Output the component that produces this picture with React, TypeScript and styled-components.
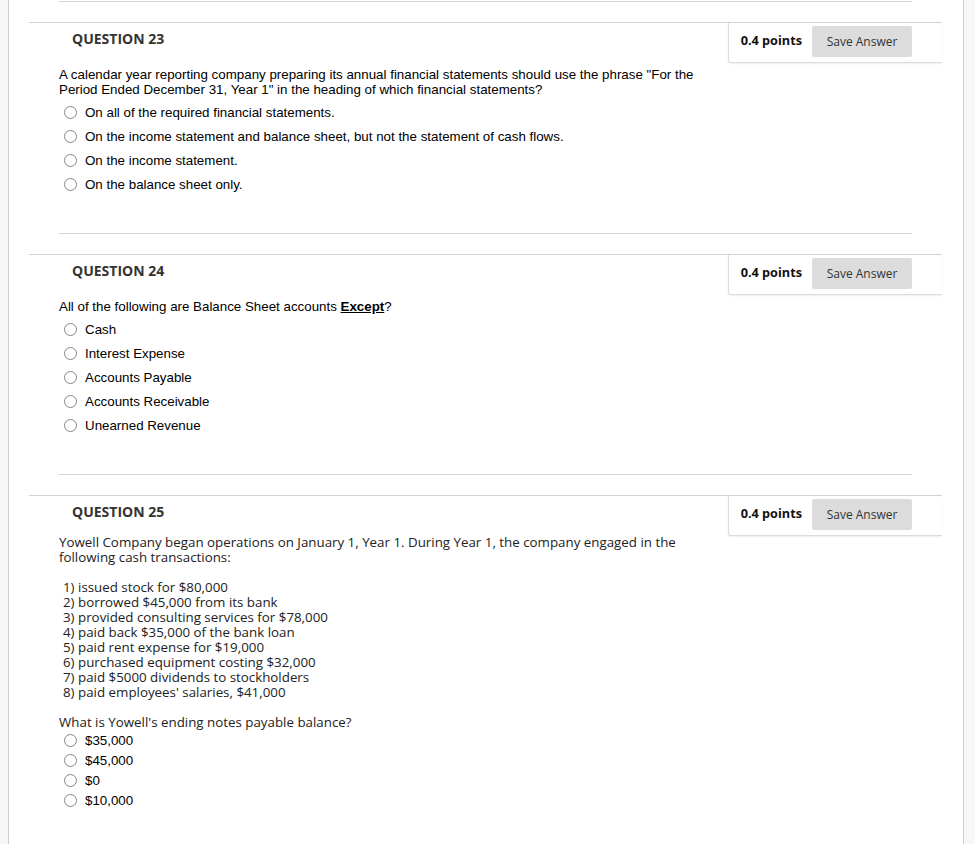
import React from 'react';
import styled, { createGlobalStyle } from 'styled-components';

const Global = createGlobalStyle`
  html, body { margin: 0; padding: 0; background: #f7f7f7; }
  body { font-family: "Liberation Sans", Arial, sans-serif; }
  * { box-sizing: border-box; }
`;

const Page = styled.div`
  display: flex;
  min-height: 844px;
  padding-left: 8px;
  padding-right: 11px;
  background: #f7f7f7;
`;

const Content = styled.main`
  flex: 1;
  background: #fff;
  border-left: 1px solid #cdcdcd;
  border-right: 1px solid #cdcdcd;
  padding-top: 1px;
`;

const Separator = styled.hr<{ $top?: number }>`
  margin: ${(p) => p.$top ?? 0}px 51px 20px 50px;
  height: 0;
  border: 0;
  border-top: 1px solid #d3d3d3;
`;

const Header = styled.div`
  margin: 0 21px 0 20px;
  border-top: 1px solid #d3d3d3;
`;

const PointsBox = styled.div`
  float: right;
  display: flex;
  align-items: center;
  gap: 10px;
  padding: 3px 30px 5px 12px;
  background: #fff;
  border-left: 1px solid #dcdcdc;
  border-bottom: 1px solid #dcdcdc;
  border-bottom-left-radius: 3px;
  box-shadow: 0 1px 2px rgba(0, 0, 0, 0.07);
`;

const Points = styled.span`
  font-family: "Open Sans", sans-serif;
  font-weight: 700;
  font-size: 12.7px;
  line-height: 17px;
  padding-bottom: 3px;
  color: #111;
`;

const SaveButton = styled.button`
  width: 100px;
  height: 31px;
  padding: 0;
  border: 0;
  border-radius: 2px;
  background: #dcdcdc;
  color: #333;
  font-family: "Open Sans", sans-serif;
  font-size: 12px;
  cursor: pointer;
`;

const Title = styled.h3`
  margin: 0;
  padding: 6px 0 0 43px;
  font-family: "Open Sans", sans-serif;
  font-weight: 700;
  font-size: 14px;
  line-height: 19px;
  color: #333;
`;

const Body = styled.div<{ $top: number; $sans?: boolean }>`
  margin-left: 50px;
  padding-top: ${(p) => p.$top}px;
  font-family: ${(p) => (p.$sans ? '"Open Sans", sans-serif' : '"Liberation Sans", Arial, sans-serif')};
  font-size: 13.33px;
  line-height: 15px;
  color: ${(p) => (p.$sans ? '#222' : '#000')};
`;

const Para = styled.p<{ $gap?: number; $indent?: number }>`
  margin: 0 0 ${(p) => p.$gap ?? 0}px 0;
  padding-left: ${(p) => p.$indent ?? 0}px;
`;

const Options = styled.ul<{ $top: number }>`
  list-style: none;
  margin: ${(p) => p.$top}px 0 0 0;
  padding: 0;
  font-family: "Liberation Sans", Arial, sans-serif;
  font-size: 13.33px;
  line-height: 15px;
  color: #000;
`;

const OptionRow = styled.li<{ $h: number }>`
  display: flex;
  align-items: center;
  gap: 8px;
  height: ${(p) => p.$h}px;
  padding-left: 5px;
`;

const Radio = styled.input.attrs({ type: 'radio' })`
  appearance: none;
  -webkit-appearance: none;
  width: 13px;
  height: 13px;
  margin: 0;
  flex-shrink: 0;
  border: 1px solid #858585;
  border-radius: 50%;
  background: #fff;
`;

const Strong = styled.strong`
  text-decoration: underline;
`;

type OptionListProps = {
  name: string;
  options: string[];
  rowH: number;
  optTop: number;
};

function QuestionHeader({ num }: { num: number }) {
  return (
    <Header>
      <PointsBox>
        <Points>0.4 points</Points>
        <SaveButton>Save Answer</SaveButton>
      </PointsBox>
      <Title>QUESTION {num}</Title>
    </Header>
  );
}

function OptionList({ name, options, rowH, optTop }: OptionListProps) {
  return (
    <Options $top={optTop}>
      {options.map((o) => (
        <OptionRow key={o} $h={rowH}>
          <Radio name={name} />
          <span>{o}</span>
        </OptionRow>
      ))}
    </Options>
  );
}

export default function App() {
  return (
    <>
      <Global />
      <Page>
        <Content>
          <Separator />
          <QuestionHeader num={23} />
          <Body $top={19}>
            <Para>
              A calendar year reporting company preparing its annual financial statements should use the phrase "For the
              <br />
              Period Ended December 31, Year 1" in the heading of which financial statements?
            </Para>
            <OptionList
              name="q23"
              rowH={24}
              optTop={3}
              options={[
                'On all of the required financial statements.',
                'On the income statement and balance sheet, but not the statement of cash flows.',
                'On the income statement.',
                'On the balance sheet only.',
              ]}
            />
          </Body>
          <Separator $top={37} />

          <QuestionHeader num={24} />
          <Body $top={19}>
            <Para>
              All of the following are Balance Sheet accounts <Strong>Except</Strong>?
            </Para>
            <OptionList
              name="q24"
              rowH={24}
              optTop={3}
              options={['Cash', 'Interest Expense', 'Accounts Payable', 'Accounts Receivable', 'Unearned Revenue']}
            />
          </Body>
          <Separator $top={37} />

          <QuestionHeader num={25} />
          <Body $top={14} $sans>
            <Para $gap={15}>
              Yowell Company began operations on January 1, Year 1. During Year 1, the company engaged in the
              <br />
              following cash transactions:
            </Para>
            <Para $gap={15} $indent={4}>
              1) issued stock for $80,000
              <br />
              2) borrowed $45,000 from its bank
              <br />
              3) provided consulting services for $78,000
              <br />
              4) paid back $35,000 of the bank loan
              <br />
              5) paid rent expense for $19,000
              <br />
              6) purchased equipment costing $32,000
              <br />
              7) paid $5000 dividends to stockholders
              <br />
              8) paid employees' salaries, $41,000
            </Para>
            <Para>What is Yowell's ending notes payable balance?</Para>
            <OptionList name="q25" rowH={20} optTop={0} options={['$35,000', '$45,000', '$0', '$10,000']} />
          </Body>
        </Content>
      </Page>
    </>
  );
}
